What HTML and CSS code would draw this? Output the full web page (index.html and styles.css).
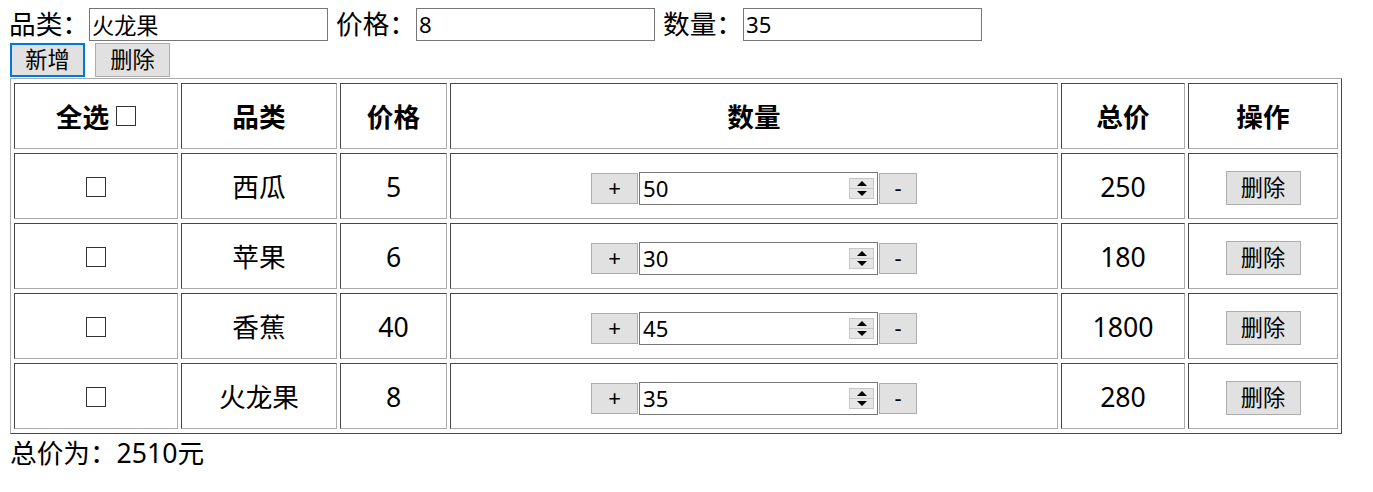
FILE: index.html
```html
<!DOCTYPE html>
<html lang="zh-CN">
<head>
<meta charset="utf-8">
<title>购物车</title>
<link rel="stylesheet" href="styles.css">
</head>
<body>
<div class="form-row">
  <span class="label">品类：</span><input class="field" type="text" value="火龙果">
  <span class="label">价格：</span><input class="field" type="text" value="8">
  <span class="label">数量：</span><input class="field" type="text" value="35">
</div>
<div class="btn-row">
  <button class="btn btn-focus">新增</button>
  <button class="btn">删除</button>
</div>
<table class="grid">
  <thead>
    <tr>
      <th class="c1">全选<input class="check check-head" type="checkbox"></th>
      <th class="c2">品类</th>
      <th class="c3">价格</th>
      <th class="c4">数量</th>
      <th class="c5">总价</th>
      <th class="c6">操作</th>
    </tr>
  </thead>
  <tbody>
    <tr>
      <td><input class="check" type="checkbox"></td>
      <td>西瓜</td>
      <td>5</td>
      <td><span class="stepper"><button class="step step-plus">+</button><span class="num"><input class="num-input" type="text" value="50"><span class="spin"><span class="spin-up"></span><span class="spin-down"></span></span></span><button class="step step-minus">-</button></span></td>
      <td>250</td>
      <td><button class="btn">删除</button></td>
    </tr>
    <tr>
      <td><input class="check" type="checkbox"></td>
      <td>苹果</td>
      <td>6</td>
      <td><span class="stepper"><button class="step step-plus">+</button><span class="num"><input class="num-input" type="text" value="30"><span class="spin"><span class="spin-up"></span><span class="spin-down"></span></span></span><button class="step step-minus">-</button></span></td>
      <td>180</td>
      <td><button class="btn">删除</button></td>
    </tr>
    <tr>
      <td><input class="check" type="checkbox"></td>
      <td>香蕉</td>
      <td>40</td>
      <td><span class="stepper"><button class="step step-plus">+</button><span class="num"><input class="num-input" type="text" value="45"><span class="spin"><span class="spin-up"></span><span class="spin-down"></span></span></span><button class="step step-minus">-</button></span></td>
      <td>1800</td>
      <td><button class="btn">删除</button></td>
    </tr>
    <tr>
      <td><input class="check" type="checkbox"></td>
      <td>火龙果</td>
      <td>8</td>
      <td><span class="stepper"><button class="step step-plus">+</button><span class="num"><input class="num-input" type="text" value="35"><span class="spin"><span class="spin-up"></span><span class="spin-down"></span></span></span><button class="step step-minus">-</button></span></td>
      <td>280</td>
      <td><button class="btn">删除</button></td>
    </tr>
  </tbody>
</table>
<div class="total">总价为：2510元</div>
</body>
</html>
```
FILE: styles.css
```css
html, body {
  background: #ffffff;
}
body {
  margin: 8px 10px 0 10px;
  font-family: "Noto Sans", "Noto Sans CJK SC", sans-serif;
  font-size: 26.67px;
  line-height: 35px;
  color: #000000;
}
.form-row {
  display: flex;
  align-items: flex-start;
  height: 35px;
  margin-left: -1px;
}
.label {
  display: block;
  width: 80px;
  line-height: 31px;
  white-space: nowrap;
}
.label + .field {
  margin-right: 8px;
}
.field {
  box-sizing: border-box;
  width: 239px;
  height: 33px;
  margin: 0;
  padding: 0 2px;
  border: 1px solid #767676;
  font-family: "Noto Sans", "Noto Sans CJK SC", sans-serif;
  font-size: 22.2px;
  color: #000;
  background: #fff;
  outline: none;
}
.btn-row {
  display: flex;
  align-items: flex-start;
  gap: 10px;
  height: 35px;
}
.btn {
  box-sizing: border-box;
  width: 75px;
  height: 34px;
  margin: 0;
  padding: 0;
  border: 1px solid #adadad;
  background: #e1e1e1;
  font-family: "Noto Sans", "Noto Sans CJK SC", sans-serif;
  font-size: 22.2px;
  line-height: 30px;
  color: #000;
  vertical-align: middle;
}
.btn-focus {
  border: 2px solid #0078d7;
}
.grid {
  table-layout: fixed;
  width: 1332px;
  border-collapse: separate;
  border-spacing: 3px 4px;
  border-style: solid;
  border-width: 1px;
  border-color: #ababab #474747 #474747 #ababab;
}
.grid th,
.grid td {
  box-sizing: border-box;
  height: 66px;
  padding: 0;
  text-align: center;
  vertical-align: middle;
  border-style: solid;
  border-width: 1px;
  border-color: #474747 #ababab #ababab #474747;
  font-size: 26.67px;
  line-height: 35px;
}
.grid th {
  font-weight: bold;
}
.c1 { width: 164px; }
.c2 { width: 156px; }
.c3 { width: 107px; }
.c4 { width: 608px; }
.c5 { width: 124px; }
.c6 { width: 150px; }
.check {
  -webkit-appearance: none;
  appearance: none;
  box-sizing: border-box;
  width: 20px;
  height: 20px;
  margin: 0;
  border: 1px solid #333333;
  background: #ffffff;
  vertical-align: middle;
  position: relative;
  top: -2px;
}
.check-head {
  margin-left: 7px;
  top: -3px;
}
.stepper {
  display: inline-flex;
  align-items: center;
  gap: 1px;
  vertical-align: middle;
}
.step {
  box-sizing: border-box;
  height: 31px;
  margin: 0;
  padding: 0;
  border: 1px solid #adadad;
  background: #e1e1e1;
  font-family: "Noto Sans", "Noto Sans CJK SC", sans-serif;
  font-size: 22.2px;
  line-height: 28px;
  color: #000;
}
.step-plus { width: 47px; }
.step-minus { width: 38px; }
.num {
  box-sizing: border-box;
  display: flex;
  align-items: center;
  width: 239px;
  height: 33px;
  border: 1px solid #767676;
  background: #fff;
}
.num-input {
  flex: 1;
  min-width: 0;
  height: 31px;
  margin: 0;
  padding: 0 0 0 3px;
  border: none;
  outline: none;
  background: transparent;
  font-family: "Noto Sans", "Noto Sans CJK SC", sans-serif;
  font-size: 22.2px;
  color: #000;
}
.spin {
  box-sizing: border-box;
  display: flex;
  flex-direction: column;
  width: 25px;
  height: 21px;
  margin-right: 3px;
  border: 1px solid #c6c6c6;
  background: #e6e6e6;
}
.spin-up,
.spin-down {
  flex: 1;
  display: flex;
  align-items: center;
  justify-content: center;
}
.spin-up {
  border-bottom: 1px solid #c6c6c6;
}
.spin-up::before {
  content: "";
  border-left: 5px solid transparent;
  border-right: 5px solid transparent;
  border-bottom: 5px solid #000;
}
.spin-down::before {
  content: "";
  border-left: 5px solid transparent;
  border-right: 5px solid transparent;
  border-top: 5px solid #000;
}
.total {
  line-height: 38px;
}
```
